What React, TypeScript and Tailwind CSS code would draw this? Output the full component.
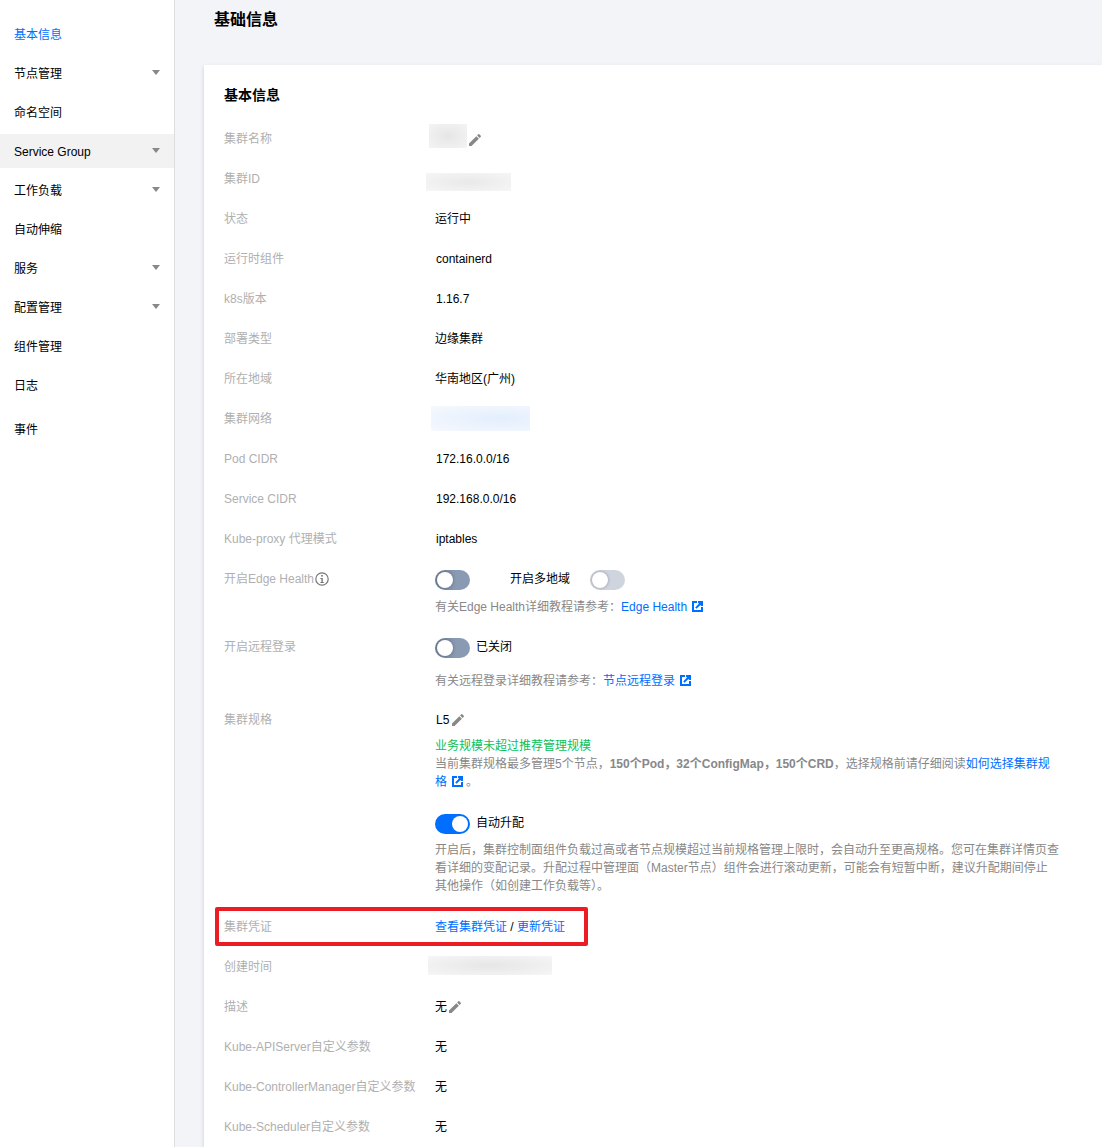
import type { ReactNode } from "react";

const sideItems = [
  { name: "基本信息", active: true },
  { name: "节点管理", caret: true },
  { name: "命名空间" },
  { name: "Service Group", caret: true, hover: true },
  { name: "工作负载", caret: true },
  { name: "自动伸缩" },
  { name: "服务", caret: true },
  { name: "配置管理", caret: true },
  { name: "组件管理" },
  { name: "日志" },
];

const PenIcon = ({ className }: { className: string }) => (
  <svg viewBox="0 0 24 24" className={className} fill="#888888">
    <path d="M3 17.25V21h3.75L17.81 9.94l-3.75-3.75L3 17.25zM20.71 7.04c.39-.39.39-1.02 0-1.41l-2.34-2.34c-.39-.39-1.02-.39-1.41 0l-1.83 1.83 3.75 3.75 1.83-1.83z" />
  </svg>
);

const LinkIcon = () => (
  <svg viewBox="0 0 11 11" className="inline-block w-[11px] h-[11px] ml-[5px] align-[-1px]" fill="none">
    <path d="M5 1H1v9h9V6" stroke="#006eff" strokeWidth="2" />
    <path d="M6 0h5v5H9.2L8.4 4 4.6 7.8 3.2 6.4 7 2.6 6 1.8z" fill="#006eff" />
  </svg>
);

const InfoIcon = () => (
  <svg viewBox="0 0 14 14" className="w-[14px] h-[14px] ml-[1px]" fill="none">
    <circle cx="7" cy="7" r="6.2" stroke="#777777" strokeWidth="1.2" />
    <rect x="6.2" y="3" width="1.6" height="1.6" fill="#777777" />
    <path d="M5.4 6h2.4v4h1v1H5.4v-1h1V7h-1z" fill="#777777" />
  </svg>
);

const Caret = () => (
  <svg viewBox="0 0 8 5" className="w-2 h-[5px] -mt-[3px]" fill="#888888">
    <path d="M0 0h8L4 5z" />
  </svg>
);

const Toggle = ({ on, disabled }: { on?: boolean; disabled?: boolean }) => {
  const bg = on
    ? "bg-[#006eff] justify-end"
    : disabled
      ? "bg-[#cfd5de]"
      : "bg-gradient-to-r from-[#6f7f99] to-[#8a9ab2] to-[60%]";
  return (
    <div className={`flex items-center w-[35px] h-5 rounded-full px-[2px] ${bg}`}>
      <div className={`w-4 h-4 rounded-full bg-white ${on ? "" : "shadow-[0_0_3px_rgba(60,70,90,0.5)]"}`}></div>
    </div>
  );
};

const Row = ({ label, children }: { label: ReactNode; children: ReactNode }) => (
  <div className="flex py-[11px] leading-[18px]">
    <div className="w-[211px] shrink-0 flex items-center h-[18px] text-[#b0b0b0] whitespace-nowrap">{label}</div>
    <div className="flex-1 text-[#000000]">{children}</div>
  </div>
);

const Mosaic = ({ className }: { className: string }) => <div className={className}></div>;

const App = () => {
  return (
    <div
      className="flex h-[1147px] overflow-hidden bg-[#f2f4f8] text-xs"
      style={{ fontFamily: '"Liberation Sans", "Noto Sans CJK SC", sans-serif' }}
    >
      <div className="w-[175px] shrink-0 bg-white border-r border-[#dddddd] pt-[17px]">
        {sideItems.map((item) => (
          <div
            key={item.name}
            className={`flex items-center justify-between h-[34px] mb-[5px] pl-[14px] pr-[14px] pt-[2px] ${item.hover ? "bg-[#f2f2f2]" : ""} ${item.active ? "text-[#006eff]" : "text-[#000000]"}`}
          >
            <span>{item.name}</span>
            {item.caret && <Caret />}
          </div>
        ))}
        <div className="flex items-center h-[34px] mt-[10px] pl-[14px] pt-[2px] text-[#000000]">事件</div>
      </div>

      <div className="flex-1 min-w-0 flex flex-col">
        <div className="h-[65px] shrink-0 pl-[39px] pt-[9px] text-base leading-[22px] font-bold text-[#000000]">基础信息</div>
        <div className="flex-1 ml-[29px] bg-white shadow-[0_2px_4px_rgba(54,58,80,0.2)] pl-5 pr-[43px]">
          <h3 className="h-[54px] pt-[20px] text-sm leading-5 font-bold text-[#000000]">基本信息</h3>

          <Row label="集群名称">
            <div className="flex items-center h-[18px]">
              <Mosaic className="w-[38px] h-6 -ml-[6px] -mt-[6px] shrink-0 bg-[radial-gradient(ellipse_at_center,#e6e6e6,#f4f4f4)]" />
              <PenIcon className="w-4 h-4 mt-[2px]" />
            </div>
          </Row>
          <Row label="集群ID">
            <div className="flex h-[18px]">
              <Mosaic className="w-[85px] h-[18px] -ml-[9px] mt-[3px] shrink-0 bg-[radial-gradient(ellipse_at_center,#e9e9e9,#f6f6f6)]" />
            </div>
          </Row>
          <Row label="状态">运行中</Row>
          <Row label="运行时组件"><span className="pl-[1px]">containerd</span></Row>
          <Row label="k8s版本"><span className="pl-[1px]">1.16.7</span></Row>
          <Row label="部署类型">边缘集群</Row>
          <Row label="所在地域">华南地区(广州)</Row>
          <Row label="集群网络">
            <div className="flex h-[18px]">
              <Mosaic className="w-[99px] h-[25px] -ml-[4px] -mt-[4px] shrink-0 bg-[radial-gradient(ellipse_at_70%_50%,#e3eefd,#f6f9fe)]" />
            </div>
          </Row>
          <Row label="Pod CIDR"><span className="pl-[1px]">172.16.0.0/16</span></Row>
          <Row label="Service CIDR"><span className="pl-[1px]">192.168.0.0/16</span></Row>
          <Row label="Kube-proxy 代理模式"><span className="pl-[1px]">iptables</span></Row>

          <div className="flex pt-[11px] pb-[11px] leading-[18px]">
            <div className="w-[211px] shrink-0 flex items-center h-[18px] text-[#b0b0b0]">
              开启Edge Health
              <InfoIcon />
            </div>
            <div className="flex-1">
              <div className="flex items-center h-5 text-[#000000]">
                <Toggle />
                <span className="ml-10 mr-5 mb-[2px]">开启多地域</span>
                <Toggle disabled />
              </div>
              <p className="mt-2 text-[#888888]">
                有关Edge Health详细教程请参考：<span className="text-[#006eff]">Edge Health</span>
                <LinkIcon />
              </p>
            </div>
          </div>

          <div className="flex pt-[11px] pb-[10px] leading-[18px]">
            <div className="w-[211px] shrink-0 text-[#b0b0b0]">开启远程登录</div>
            <div className="flex-1">
              <div className="flex items-center h-5 text-[#000000]">
                <Toggle />
                <span className="ml-[6px] mb-[2px]">已关闭</span>
              </div>
              <p className="mt-[14px] text-[#888888]">
                有关远程登录详细教程请参考：<span className="text-[#006eff]">节点远程登录</span>
                <LinkIcon />
              </p>
            </div>
          </div>

          <div className="flex pt-[11px] pb-3 leading-[18px]">
            <div className="w-[211px] shrink-0 text-[#b0b0b0]">集群规格</div>
            <div className="flex-1">
              <div className="flex items-center h-[18px] pl-[1px] text-[#000000]">
                L5
                <PenIcon className="w-4 h-4 ml-[1px]" />
              </div>
              <p className="mt-[8px] text-[#0abf5b]">业务规模未超过推荐管理规模</p>
              <p className="text-[#888888]">
                当前集群规格最多管理5个节点，<b>150个Pod，32个ConfigMap，150个CRD</b>，选择规格前请仔细阅读
                <span className="text-[#006eff]">如何选择集群规格</span>
                <LinkIcon />
                <span className="ml-[3px]">。</span>
              </p>
              <div className="flex items-center mt-[23px] h-5 text-[#000000]">
                <Toggle on />
                <span className="ml-[6px] mb-[2px]">自动升配</span>
              </div>
              <p className="mt-[7px] text-[#888888]">
                开启后，集群控制面组件负载过高或者节点规模超过当前规格管理上限时，会自动升至更高规格。您可在集群详情页查看详细的变配记录。升配过程中管理面（Master节点）组件会进行滚动更新，可能会有短暂中断，建议升配期间停止其他操作（如创建工作负载等）。
              </p>
            </div>
          </div>

          <div className="relative">
            <Row label="集群凭证">
              <span className="text-[#006eff]">查看集群凭证</span> / <span className="text-[#006eff]">更新凭证</span>
            </Row>
            <div className="absolute left-[-9px] top-0 w-[373px] h-[39px] border-4 border-[#ec1c24] rounded-[2px]"></div>
          </div>

          <Row label="创建时间">
            <div className="flex h-[18px]">
              <Mosaic className="w-[124px] h-[19px] -ml-[7px] -mt-[2px] shrink-0 bg-[radial-gradient(ellipse_at_center,#e6e6e6,#f6f6f6)]" />
            </div>
          </Row>
          <Row label="描述">
            <div className="flex items-center h-[18px]">
              无
              <PenIcon className="w-4 h-4" />
            </div>
          </Row>
          <Row label="Kube-APIServer自定义参数">无</Row>
          <Row label="Kube-ControllerManager自定义参数">无</Row>
          <Row label="Kube-Scheduler自定义参数">无</Row>
        </div>
      </div>
    </div>
  );
};

export default App;
